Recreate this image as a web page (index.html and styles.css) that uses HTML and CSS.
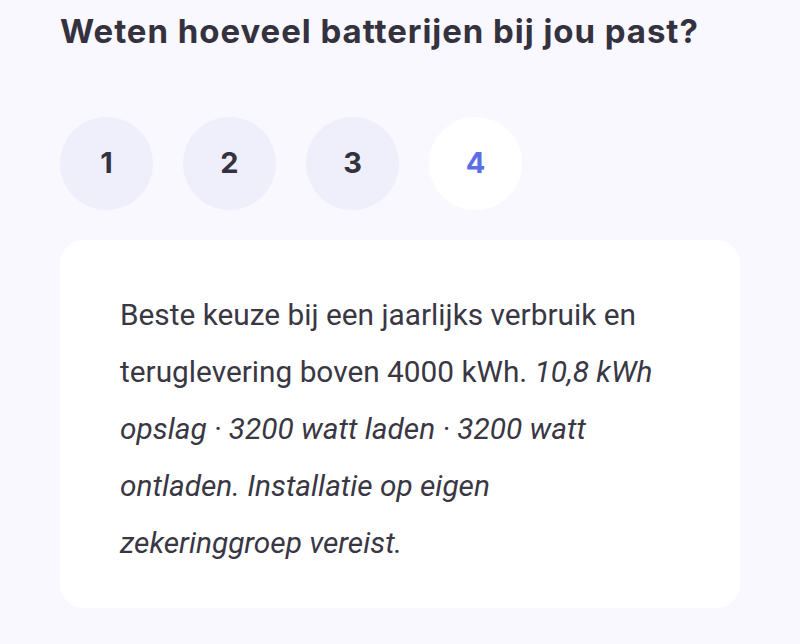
FILE: index.html
```html
<!DOCTYPE html>
<html lang="nl">
<head>
    <meta charset="UTF-8">
    <meta name="viewport" content="width=device-width, initial-scale=1.0">
    <title>Batterijen</title>
    <link rel="stylesheet" href="styles.css">
</head>
<body>
    <div class="container">
        <h2>Weten hoeveel batterijen bij jou past?</h2>
        <div class="steps">
            <button class="step">1</button>
            <button class="step">2</button>
            <button class="step">3</button>
            <button class="step active">4</button>
        </div>
        <div class="card">
            <p>Beste keuze bij een jaarlijks verbruik en teruglevering boven 4000 kWh. <em>10,8 kWh opslag · 3200 watt laden · 3200 watt ontladen. Installatie op eigen zekeringgroep vereist.</em></p>
        </div>
    </div>
</body>
</html>
```

FILE: styles.css
```css
body {
    margin: 0;
    background-color: #f9f8fe;
    font-family: Roboto, "Liberation Sans", sans-serif;
    color: #35323f;
}
.container {
    padding: 0 60px;
}
h2 {
    font-family: Inter, "Liberation Sans", sans-serif;
    font-weight: 700;
    font-size: 33px;
    line-height: 40px;
    letter-spacing: 0.95px;
    margin: 0;
    padding-top: 11px;
    height: 106px;
    color: #35323f;
}
.steps {
    display: flex;
    gap: 30px;
    margin-bottom: 30px;
}
.step {
    width: 93px;
    height: 93px;
    border-radius: 50%;
    border: none;
    background-color: #efeffb;
    font-family: Inter, "Liberation Sans", sans-serif;
    font-size: 29px;
    font-weight: 700;
    color: #35323f;
    padding: 0 0 3px 0;
}
.step.active {
    background-color: #fff;
    color: #5b6ee8;
}
.card {
    background: #fff;
    border-radius: 24px;
    padding: 46px 80px 37px 60px;
    width: 540px;
}
.card p {
    margin: 0;
    font-size: 29.8px;
    line-height: 57px;
    color: #3a3744;
}
```
